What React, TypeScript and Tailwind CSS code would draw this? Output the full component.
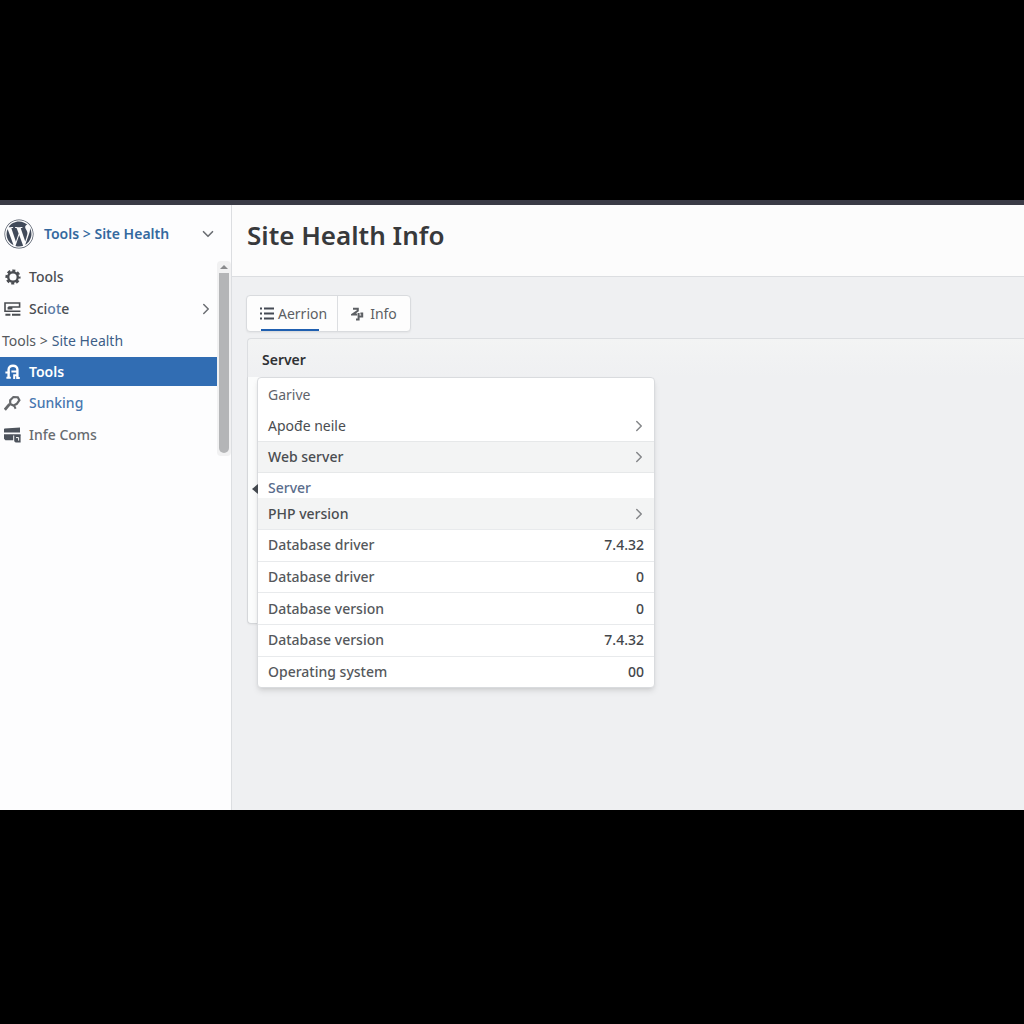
import type { ReactNode } from "react";
import { ChevronDown, ChevronRight } from "lucide-react";
import { FaWordpress } from "react-icons/fa";

interface MenuRow {
  label: string;
  className: string;
  chevron?: boolean;
}

const menuRows: MenuRow[] = [
  { label: "Garive", className: "h-[33px] items-center font-normal text-[#5f646b]" },
  { label: "Apođe neile", className: "h-[30px] items-center font-normal", chevron: true },
  {
    label: "Web server",
    className:
      "h-8 items-center bg-[#f3f4f4] border-y border-[#e6e8e9] font-medium text-[#4a4d51]",
    chevron: true,
  },
  { label: "Server", className: "h-[25px] items-end font-medium text-[#5a6d8c]" },
  {
    label: "PHP version",
    className: "h-[31px] items-center bg-[#f3f4f4] font-medium text-[#4a4d51]",
    chevron: true,
  },
];

const infoRows = [
  { label: "Database driver", value: "7.4.32" },
  { label: "Database driver", value: "0" },
  { label: "Database version", value: "0" },
  { label: "Database version", value: "7.4.32" },
  { label: "Operating system", value: "00" },
];

function GearIcon() {
  return (
    <svg viewBox="0 0 16 16" className="size-4" fill="none" stroke="currentColor">
      <circle cx="8" cy="8" r="4.8" strokeWidth="2.4" />
      <circle cx="8" cy="8" r="6.4" strokeWidth="2.4" strokeDasharray="3 2.03" strokeDashoffset="1.5" />
    </svg>
  );
}

function ServerIcon() {
  return (
    <svg viewBox="0 0 17 16" className="h-4 w-[17px]" fill="none" stroke="currentColor" strokeWidth="1.6">
      <path d="M16.4 2H1v8.2h15.4M4.4 6h11.2V2M4.4 6v1.6h4" />
      <path d="M1.4 13.8h5M8 13.8h8.4" strokeWidth="2" />
    </svg>
  );
}

function LockIcon() {
  return (
    <svg viewBox="0 0 16 16" className="size-4" fill="none" stroke="currentColor">
      <path d="M3.6 14V5.6C3.6 3 5.4 1.8 8 1.8s4.4 1.2 4.4 3.8V15" strokeWidth="2.4" />
      <path d="M.4 8.4h4.2M6.4 7.6h6M1.4 13.8h4.4M9.2 15v-3.8h3M12.4 14h2.4" strokeWidth="2" />
    </svg>
  );
}

function WrenchIcon() {
  return (
    <svg viewBox="0 0 17 16" className="h-4 w-[17px]" fill="none" stroke="currentColor" strokeWidth="2">
      <path d="M.8 14.8 5.6 9.2" strokeWidth="2.8" />
      <path d="M6.2 9.6V5.2L9.4 2l4.4.2 1.6 3-2.6 3.6-3.4 1.8-3.6-1.8" strokeWidth="2.2" />
      <path d="M10 10.4l1.6 3.4" />
    </svg>
  );
}

function CardsIcon() {
  return (
    <svg viewBox="0 0 17 16" className="h-4 w-[17px]" fill="currentColor">
      <path d="M.6 1.4 16 .6v5H0V2zM0 7.2h16.6v1.2H9.2v4.8H1.4L0 11.8z" />
      <path d="M10.2 8h6.4v7.6h-5l-1.4-1.4z" />
      <path d="M12 10.6h2.6v3" fill="none" stroke="#fff" strokeWidth="1" />
    </svg>
  );
}

function ListIcon() {
  return (
    <svg viewBox="0 0 14 13" className="h-[13px] w-[14px]" fill="currentColor">
      <path d="M0 .5h2v2H0zM0 5.5h2v2H0zM0 10.5h2v2H0zM4 .5h10v2H4zM4 5.5h10v2H4zM4 10.5h10v2H4z" />
    </svg>
  );
}

function PluginIcon() {
  return (
    <svg viewBox="0 0 13 14" className="h-[14px] w-[13px]" fill="none" stroke="currentColor" strokeWidth="2">
      <path d="M2 1.8h4.8v2L1.6 7.4h4.6" />
      <path d="M7.6 6v6.6M5 12.4h3.6M9.4 6.4h1.8v3.2H8.4" />
    </svg>
  );
}

function SideLink({
  icon,
  children,
  className,
}: {
  icon: ReactNode;
  children: ReactNode;
  className: string;
}) {
  return (
    <a href="#" className={`flex items-center gap-2 pl-1 ${className}`}>
      <span className="flex w-[17px] justify-center">{icon}</span>
      {children}
    </a>
  );
}

function Sidebar() {
  return (
    <aside className="flex w-[232px] shrink-0 flex-col border-r border-[#dcdee1] bg-[#fdfdfe]">
      <div className="flex h-14 items-center pt-[2px] pl-1 pr-[14px]">
        <FaWordpress className="size-[30px] text-[#414a5a]" />
        <a href="#" className="ml-[10px] flex-1 font-semibold text-[#34699f]">
          Tools <span className="font-medium">&gt;</span> Site Health
        </a>
        <button type="button" aria-label="Toggle menu" className="text-[#6b6e73]">
          <ChevronDown size={18} strokeWidth={2.2} />
        </button>
      </div>
      <div className="flex">
        <nav className="min-w-0 flex-1">
          <SideLink icon={<GearIcon />} className="h-[31px] text-[#4a4d52]">
            Tools
          </SideLink>
          <SideLink icon={<ServerIcon />} className="h-[33px] pr-[2px] text-[#4a4d52]">
            <span className="flex-1">
              Sci<span className="text-[#5a7ba6]">ot</span>e
            </span>
            <ChevronRight size={18} className="text-[#6b6e73]" />
          </SideLink>
          <a href="#" className="flex h-8 items-center gap-1 pl-[2px] font-normal text-[#55585c]">
            Tools &gt; <span className="text-[#3d5e87]">Site Health</span>
          </a>
          <SideLink
            icon={<LockIcon />}
            className="h-[29px] bg-[#316db3] font-semibold text-white"
          >
            Tools
          </SideLink>
          <SideLink
            icon={
              <span className="text-[#66686b]">
                <WrenchIcon />
              </span>
            }
            className="h-[33px] text-[#4877b0]"
          >
            Sunking
          </SideLink>
          <SideLink
            icon={
              <span className="text-[#4d535c]">
                <CardsIcon />
              </span>
            }
            className="h-8 text-[#686b70]"
          >
            Infe Coms
          </SideLink>
        </nav>
        <div className="-mb-[5px] flex w-[14px] flex-col items-center rounded bg-[#f1f1f2] pb-[3px]">
          <svg viewBox="0 0 8 4" className="mt-1 mb-1 h-1 w-2" fill="#8a8b8d">
            <path d="M4 0 8 4H0z" />
          </svg>
          <div className="w-[10px] flex-1 rounded-b-full bg-[#b4b5b7]" />
        </div>
      </div>
    </aside>
  );
}

function ServerMenu() {
  return (
    <div className="absolute top-0 left-[9px] w-[398px] rounded-sm border border-[#d9dbde] bg-white shadow-md">
      {menuRows.map((row) => (
        <button
          key={row.label}
          type="button"
          className={`flex w-full justify-between px-[10px] text-left ${row.className}`}
        >
          {row.label}
          {row.chevron && (
            <ChevronRight size={18} className="-mr-1 text-[#85878a]" />
          )}
        </button>
      ))}
      <table className="h-[158px] w-full">
        <tbody>
          {infoRows.map((row, index) => (
            <tr key={index} className="border-t border-[#e8eaec]">
              <th scope="row" className="pl-[10px] text-left font-medium text-[#55585c]">
                {row.label}
              </th>
              <td className="pr-[10px] text-right text-[#44474b]">{row.value}</td>
            </tr>
          ))}
        </tbody>
      </table>
      <svg viewBox="0 0 6 10" className="absolute top-[106px] -left-[6px] h-[10px] w-[6px]" fill="#44494f">
        <path d="M6 0v10L0 5z" />
      </svg>
    </div>
  );
}

export default function App() {
  return (
    <div className="flex min-h-screen flex-col bg-black pt-[200px] pb-[214px] font-['Noto_Sans',sans-serif] text-sm leading-5 font-medium text-[#4a4d51]">
      <div className="h-[5px] bg-[#3a3b46]" />
      <div className="flex flex-1">
        <Sidebar />
        <main className="flex min-w-0 flex-1 flex-col bg-[#eff0f2]">
          <header className="flex h-[72px] items-start border-b border-[#dcdee1] bg-[#fcfcfc] pt-[14px] pl-[15px]">
            <h1 className="text-[26px] leading-8 font-semibold text-[#38393b]">
              Site Health Info
            </h1>
          </header>
          <div className="pt-[18px] pl-[15px]">
            <div className="-ml-px flex h-[37px] w-fit rounded-sm border border-[#d9dbde] bg-[#fdfdfd] text-[#5c5f63] shadow-xs">
              <button type="button" className="relative flex items-center gap-1 border-r border-[#dcdee1] pr-[10px] pl-[13px] font-normal">
                <span className="text-[#454a54]">
                  <ListIcon />
                </span>
                Aerrion
                <span className="absolute bottom-0 left-[14px] h-[2px] w-[58px] bg-[#1f5fb0]" />
              </button>
              <button type="button" className="flex items-center gap-[6px] px-[13px] font-normal">
                <PluginIcon />
                Info
              </button>
            </div>
            <section className="mt-[6px] rounded-tl-sm border-t border-l border-[#dcdee1] bg-linear-to-b from-[#f3f4f4] to-[#eff0f2]">
              <h2 className="h-[38px] pt-[11px] pl-[14px] font-semibold text-[#2f3133]">
                Server
              </h2>
            </section>
            <div className="relative h-[247px] w-[400px] rounded-b-sm border-b border-l border-[#d5d7da] bg-[#fbfcfc] shadow-xs">
              <ServerMenu />
            </div>
          </div>
        </main>
      </div>
    </div>
  );
}
